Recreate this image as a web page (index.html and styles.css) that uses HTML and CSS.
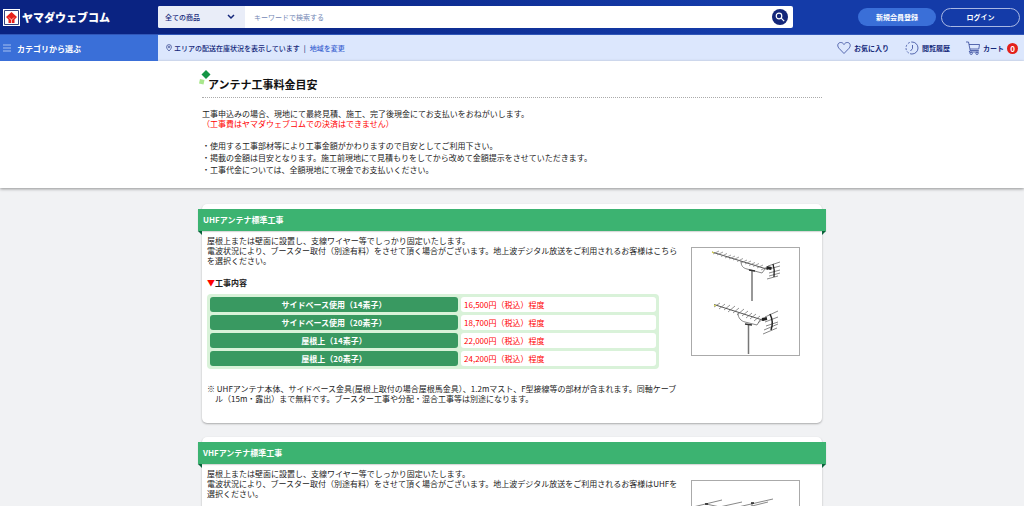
FILE: index.html
```html
<!DOCTYPE html>
<html lang="ja">
<head>
<meta charset="utf-8">
<title>アンテナ工事料金目安 | ヤマダウェブコム</title>
<link rel="stylesheet" href="styles.css">
</head>
<body>
<header>
  <div class="topbar">
    <a class="logo" href="#">
      <svg class="logo-mark" viewBox="0 0 17 17" aria-hidden="true"><path fill="#fff" d="M0 0h17v17H0z"/><path fill="none" stroke="#33427f" d="M1.500 1.500h14v14h-14z"/><path fill="#e8231c" d="M8.500 3l5.500 5-2.500 2.500V14h-6v-3.500L3 8z"/><path fill="none" stroke="#fff" stroke-width=".7" d="M6 8.500l2.500 2.500L11 8.500M8.500 11v3"/></svg>
      <span>ヤマダウェブコム</span>
    </a>
    <form class="search">
      <select class="search-category" aria-label="カテゴリ"><option>全ての商品</option></select>
      <input class="search-input" type="text" aria-label="キーワード" placeholder="キーワードで検索する">
      <button class="search-button" type="button" aria-label="検索"><svg viewBox="0 0 16 16" aria-hidden="true"><circle cx="7" cy="7" r="2.800"/><path d="M9.200 9.200l3 3"/></svg></button>
    </form>
    <div class="account">
      <button class="pill pill-solid" type="button">新規会員登録</button>
      <button class="pill" type="button">ログイン</button>
    </div>
  </div>
  <div class="subbar">
    <button class="category-menu" type="button"><svg viewBox="0 0 8 8" aria-hidden="true"><path d="M0 1h8M0 4h8M0 7h8"/></svg>カテゴリから選ぶ</button>
    <div class="area">
      <svg viewBox="0 0 6 8" aria-hidden="true"><path d="M3 7C1.500 5.500.6 4.300.6 3a2.400 2.400 0 0 1 4.800 0C5.400 4.300 4.500 5.500 3 7z"/><circle cx="3" cy="3" r=".8"/></svg>
      <span>エリアの配送在庫状況を表示しています</span><span class="divider">|</span><a href="#">地域を変更</a>
    </div>
    <nav class="tools">
      <a href="#"><svg class="icon" viewBox="0 0 14 14" aria-hidden="true"><path d="M7 12.500L2 7.300C-.5 4.300 1.200 1.500 3.700 1.500 5.300 1.500 6.300 2.400 7 3.500 7.700 2.400 8.700 1.500 10.300 1.500c2.500 0 4.200 2.800 1.700 5.800z"/></svg>お気に入り</a>
      <a href="#"><svg class="icon" viewBox="0 0 14 14" aria-hidden="true"><path d="M7 1a6 6 0 0 1 0 12M7.500 4v3.500L5.500 10"/><path stroke-dasharray="2 1.500" d="M7 13A6 6 0 0 1 7 1"/></svg>閲覧履歴</a>
      <a class="cart" href="#"><svg class="icon" viewBox="0 0 14 14" aria-hidden="true"><path d="M0 1h2.500l1.700 8.500h8.600M3 3.500h10.500L12.800 8H4M4.200 9.500L3 11h10"/><circle cx="5.200" cy="12.300" r="1.200"/><circle cx="11" cy="12.300" r="1.200"/></svg>カート<span class="badge">0</span></a>
    </nav>
  </div>
</header>

<main>
  <section class="intro">
    <div class="container">
      <h1><svg class="title-mark" viewBox="0 0 12 16" aria-hidden="true"><path fill="#139544" d="M7 0l4.500 4.500L7 9 2.500 4.500z"/><path fill="#a9e78c" d="M1 9l4.500 1-1 4.500L0 13.500z"/></svg>アンテナ工事料金目安</h1>
      <p>工事申込みの場合、現地にて最終見積、施工、完了後現金にてお支払いをおねがいします。<br><span class="alert">（工事費はヤマダウェブコムでの決済はできません）</span></p>
      <ul>
        <li>使用する工事部材等により工事金額がかわりますので目安としてご利用下さい。</li>
        <li>掲載の金額は目安となります。施工前現地にて見積もりをしてから改めて金額提示をさせていただきます。</li>
        <li>工事代金については、全額現地にて現金でお支払いください。</li>
      </ul>
    </div>
  </section>

  <div class="container cards">
    <section class="card">
      <h2>UHFアンテナ標準工事</h2>
      <div class="card-body">
        <div class="details">
          <p>屋根上または壁面に設置し、支線ワイヤー等でしっかり固定いたします。<br>電波状況により、ブースター取付（別途有料）をさせて頂く場合がございます。地上波デジタル放送をご利用されるお客様はこちら<br>を選択ください。</p>
          <h3><span class="alert">▼</span>工事内容</h3>
          <table>
            <tbody>
              <tr><th scope="row">サイドベース使用（14素子）</th><td>16,500円（税込）程度</td></tr>
              <tr><th scope="row">サイドベース使用（20素子）</th><td>18,700円（税込）程度</td></tr>
              <tr><th scope="row">屋根上（14素子）</th><td>22,000円（税込）程度</td></tr>
              <tr><th scope="row">屋根上（20素子）</th><td>24,200円（税込）程度</td></tr>
            </tbody>
          </table>
          <p class="note">※ UHFアンテナ本体、サイドベース金具(屋根上取付の場合屋根馬金具）、1.2mマスト、F型接線等の部材が含まれます。同軸ケーブ<br>ル（15m・露出）まで無料です。ブースター工事や分配・混合工事等は別途になります。</p>
        </div>
        <svg class="photo" viewBox="0 0 107 107" role="img" aria-label="UHFアンテナ">
          <g fill="none" stroke="#555" stroke-width=".7">
            <path stroke="#777" stroke-width="1.500" d="M60 22v31M56.500 77v29"/>
            <path stroke-width="1" d="M20 4l56 17.500"/>
            <path d="M49 13c0 5 2 7 6 8l15 4 3-4"/>
            <path stroke="#777" d="M21 6l6-3M25 7l6-3M29 8.500l6-3M33 10l6-3M37 11l6-3M41 12l6-3M45 13.500l6-3M49 15l6-3M53 16l6-3M57 17.500l6-3M61 18.500l6-3M65 20l6-3M69 22l6-3"/>
            <path d="M76 18l12-4M77 21l11-3M77 25l11-3M77 28l11-3M75 31l11-3"/>
            <path stroke="#222" stroke-width="1.300" d="M81 16q2 6 1 13"/>
            <path stroke="#222" stroke-width="3" d="M74.500 19.500l5 1"/>
            <path stroke="#333" stroke-width="1.500" d="M57 22l6 1M53 76l7 1"/>
            <path stroke-width="1" d="M22 56.500l50 16"/>
            <path d="M46 65c0 5 3 8 7 9l12 3 3-5"/>
            <path stroke="#666" d="M22 59l6-4M27 61l6-5M32 62l6-5M36 64l7-6M41 65l6-5M45 67l7-6M50 68l6-5M54 70l6-5M58 71l6-5M62 73l6-5M66 75l6-5"/>
            <path d="M73 69l13-6M73 74l13-5M74 78l12-4M72 82l14-6M71 86l14-6"/>
            <path stroke="#222" stroke-width="1.500" d="M78 66q4 8 1 16"/>
            <path stroke="#222" stroke-width="3" d="M70 71.500l5-1"/>
            <path stroke="#dcd84c" stroke-width="1.200" d="M20 4l2 1M22 57l2 1"/>
          </g>
        </svg>
      </div>
    </section>

    <section class="card">
      <h2>VHFアンテナ標準工事</h2>
      <div class="card-body">
        <div class="details">
          <p>屋根上または壁面に設置し、支線ワイヤー等でしっかり固定いたします。<br>電波状況により、ブースター取付（別途有料）をさせて頂く場合がございます。地上波デジタル放送をご利用されるお客様はUHFを<br>選択ください。</p>
        </div>
        <svg class="photo" viewBox="0 0 107 107" role="img" aria-label="VHFアンテナ">
          <g fill="none" stroke="#555" stroke-width=".7">
            <path d="M1 26l29-7M23 27l27-6M33 29l48-11M14 23l70 15M24 34l52-13M60 22v7l20-3"/>
            <path stroke="#222" stroke-width="1.500" d="M13 23h3M25 26h3M59 22h3"/>
            <path stroke="#777" stroke-width="1.500" d="M55 32v72"/>
          </g>
        </svg>
      </div>
    </section>
  </div>
</main>
</body>
</html>
```
FILE: styles.css
```css
* {
  box-sizing: border-box;
}

body {
  margin: 0;
  background: #f1f2f4;
  color: #222;
  font-family: "Noto Sans CJK JP", sans-serif;
  font-size: 8px;
  line-height: 10px;
  height: 100vh;
  overflow: hidden;
}

h1, h2, h3, p, ul {
  margin: 0;
  padding: 0;
}

a {
  color: inherit;
  text-decoration: none;
}

button, input, select {
  margin: 0;
  padding: 0;
  border: 0;
  font-family: inherit;
  font-size: 7px;
}

.alert {
  color: #f00;
}

/* Header */

.topbar {
  display: flex;
  align-items: center;
  height: 35px;
  padding-right: 4px;
  background: linear-gradient(90deg, #0a2382 20%, #143ba8 70%);
  border-bottom: 1px solid #3157b8;
}

.logo {
  display: flex;
  flex: 0 0 158px;
  align-items: center;
  gap: 2px;
  padding-left: 3px;
  color: #fff;
  font-size: 11px;
  font-weight: 900;
}

.logo-mark {
  width: 17px;
  height: 17px;
}

.search {
  display: flex;
  flex: 1;
  align-items: center;
  height: 22px;
  padding-right: 5px;
  overflow: hidden;
  background: #fff;
  border-radius: 2px;
}

.search-category {
  width: 87px;
  height: 22px;
  padding: 0 7px;
  appearance: none;
  background: #e9edf8 url("data:image/svg+xml,%3Csvg xmlns='http://www.w3.org/2000/svg' viewBox='0 0 8 6'%3E%3Cpath d='M1 1l3 3 3-3' fill='none' stroke='%2314277a' stroke-width='1.5'/%3E%3C/svg%3E") no-repeat right 10px center / 8px 6px;
  color: #14277a;
  font-weight: 500;
}

.search-input {
  flex: 1;
  height: 22px;
  padding-left: 9px;
  background: none;
}

.search-input::placeholder {
  color: #7488b5;
}

.search-button {
  width: 16px;
  height: 16px;
  background: #14277a;
  border-radius: 50%;
}

.search-button svg {
  display: block;
  fill: none;
  stroke: #fff;
  stroke-width: 1.2;
}

.account {
  display: flex;
  align-items: center;
  gap: 5px;
  margin-left: 65px;
}

.pill {
  width: 79px;
  height: 19px;
  background: none;
  border: 1px solid #a9b8e4;
  border-radius: 10px;
  color: #fff;
  font-weight: 700;
}

.pill-solid {
  width: 78px;
  height: 18px;
  background: #3a6fd8;
  border: 0;
}

.subbar {
  display: flex;
  align-items: center;
  height: 26px;
  background: #dce7fd;
  color: #14277a;
  font-size: 7px;
  font-weight: 500;
}

.category-menu {
  display: flex;
  flex: 0 0 158px;
  align-items: center;
  gap: 6px;
  height: 26px;
  padding-left: 3px;
  background: #3a6fd8;
  color: #fff;
  font-size: 8px;
  font-weight: 700;
}

.category-menu svg {
  width: 8px;
  height: 8px;
  stroke: #c4d5f7;
  stroke-width: .8;
}

.area {
  display: flex;
  flex: 1;
  align-items: center;
  padding-left: 8px;
}

.area svg {
  width: 6px;
  height: 8px;
  margin-right: 2px;
  fill: none;
  stroke: #14277a;
  stroke-width: .6;
}

.area a {
  color: #3a62d0;
}

.divider {
  margin: 0 4px;
}

.tools {
  display: flex;
  gap: 16px;
  padding-right: 6px;
  font-weight: 700;
}

.tools a {
  display: flex;
  align-items: center;
  gap: 3px;
}

.icon {
  width: 14px;
  height: 14px;
  fill: none;
  stroke: #33479a;
  stroke-width: .8;
}

.badge {
  width: 11px;
  height: 11px;
  background: #e3201b;
  border-radius: 50%;
  color: #fff;
  font-size: 8px;
  line-height: 11px;
  text-align: center;
}

/* Introduction */

.container {
  width: calc(100% - 48px);
  max-width: 620px;
  margin: 0 auto;
}

.intro {
  padding: 9px 0 12px;
  background: #fff;
  box-shadow: 0 1px 3px rgba(0, 0, 0, .4);
}

h1 {
  position: relative;
  margin-bottom: 11px;
  padding: 6px 0 5px 6px;
  border-bottom: 1px dotted #aaa;
  color: #111;
  font-size: 11px;
  line-height: 16px;
}

.title-mark {
  position: absolute;
  top: 0;
  left: -3px;
  width: 12px;
  height: 16px;
}

.intro ul {
  margin-top: 11px;
  line-height: 12px;
  list-style: none;
}

.intro li::before {
  content: "・";
}

/* Cards */

.cards {
  padding-top: 16px;
}

.card {
  margin-bottom: 14px;
  padding: 5px 0 19px;
  background: #fff;
  border-radius: 5px;
  box-shadow: 0 1px 2px rgba(0, 0, 0, .3);
}

h2 {
  position: relative;
  margin: 0 -4px;
  padding: 0 5px;
  background: #3cb371;
  box-shadow: 0 1px 1px rgba(0, 0, 0, .15);
  color: #fff;
  font-size: 8px;
  line-height: 22px;
}

h2::before, h2::after {
  position: absolute;
  top: 100%;
  border-top: 4px solid #08633a;
  content: "";
}

h2::before {
  left: 0;
  border-left: 4px solid transparent;
}

h2::after {
  right: 0;
  border-right: 4px solid transparent;
}

.card-body {
  display: flex;
  justify-content: space-between;
  padding: 5px 22px 0 5px;
}

.details {
  flex: 0 1 452px;
  min-width: 0;
  white-space: nowrap;
}

h3 {
  margin: 12px 0 6px;
  font-size: 8px;
  line-height: 10px;
}

table {
  width: 100%;
  background: #d9f2d9;
  border-collapse: separate;
  border-radius: 4px;
  border-spacing: 3px;
}

th, td {
  height: 15px;
  padding: 0 3px;
  border-radius: 3px;
  line-height: 10px;
}

th {
  width: 56%;
  background: #399961;
  color: #fff;
}

td {
  background: #fff;
  color: #f00;
}

.note {
  margin-top: 15px;
  padding-left: 8px;
  text-indent: -8px;
}

.photo {
  flex: 0 0 109px;
  height: 109px;
  margin-top: 11px;
  border: 1px solid #aaa;
}
```
